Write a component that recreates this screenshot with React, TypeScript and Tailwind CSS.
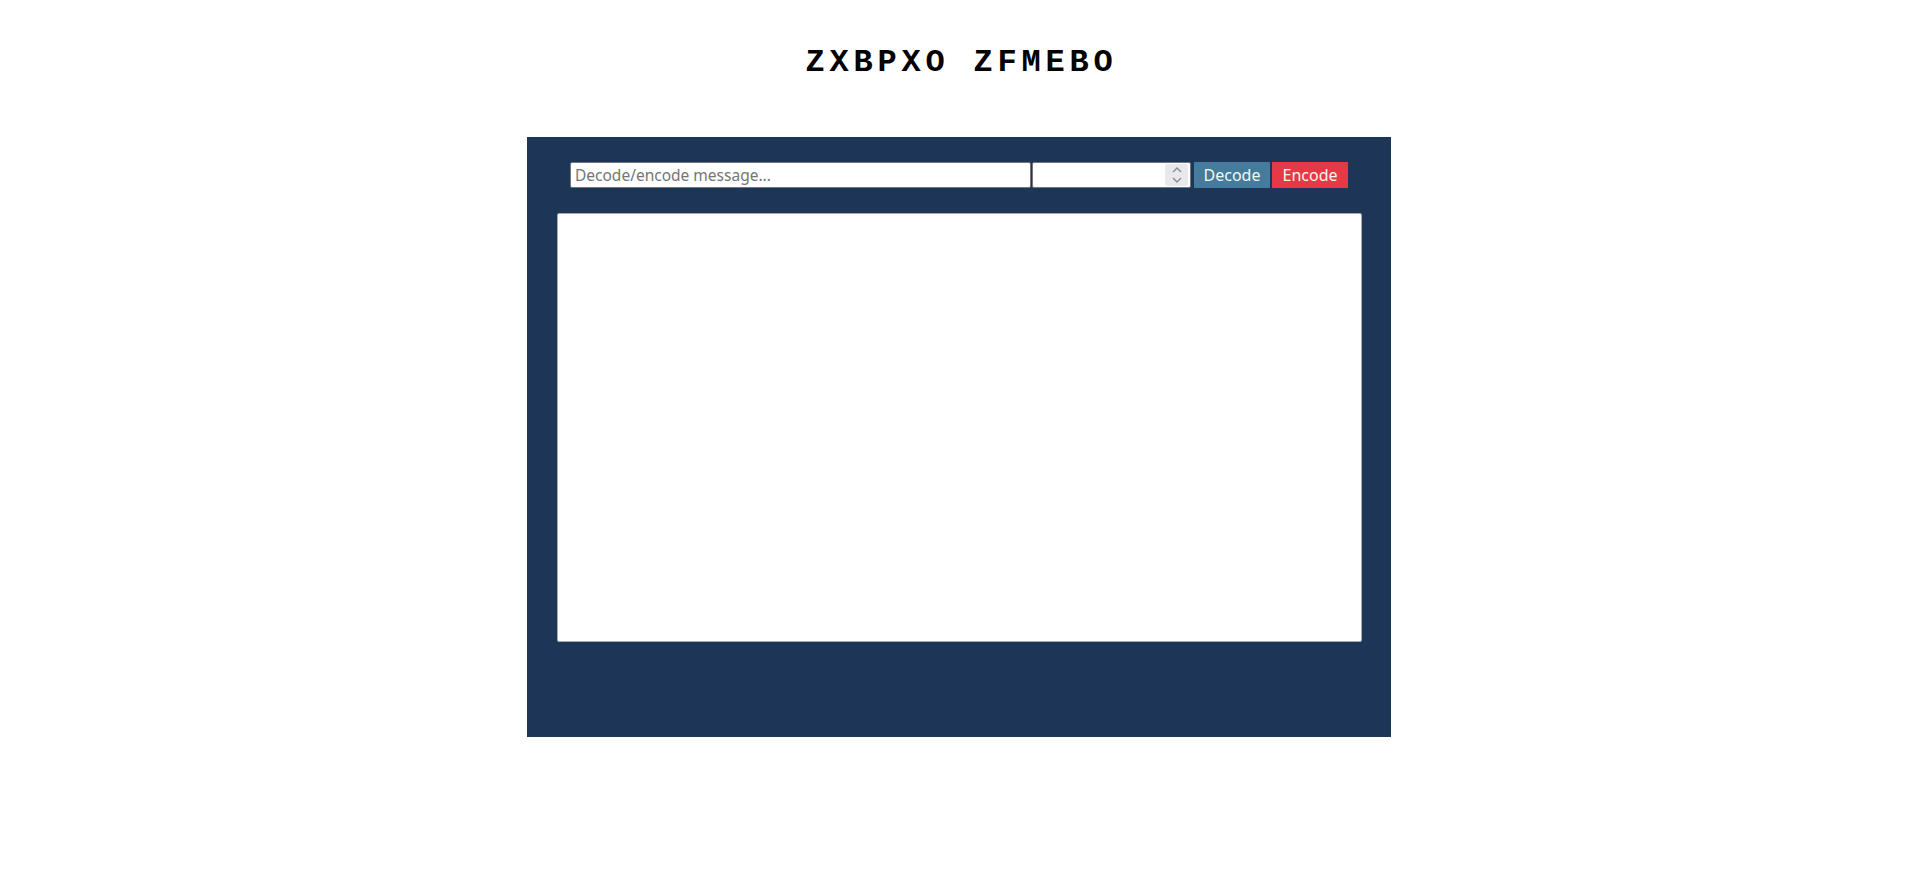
import React, { useState } from 'react';

const Spinner: React.FC = () => (
  <div className="flex flex-col items-center justify-center w-[23px] h-[22px] bg-[#e9e9ed] rounded-[2px] mr-[2px]">
    <svg width="12" height="20" viewBox="0 0 12 20" fill="none" stroke="#8a8a92" strokeWidth="1.4">
      <path d="M2 7 L6 3 L10 7" />
      <path d="M2 13 L6 17 L10 13" />
    </svg>
  </div>
);

const App: React.FC = () => {
  const [message, setMessage] = useState('');
  const [shift, setShift] = useState('');

  return (
    <div className="min-h-screen bg-white flex flex-col items-center font-['Noto_Sans',sans-serif]">
      <h1 className="mt-[45px] mb-[56px] h-[36px] leading-[36px] text-[32px] font-bold tracking-[0.15em] pl-[0.15em] text-black font-['Liberation_Mono','Courier_New',monospace]">
        ZXBPXO ZFMEBO
      </h1>

      <div className="w-[864px] h-[600px] bg-[#1d3557] flex flex-col items-center pt-[25px]">
        {/* Controls row */}
        <div className="flex items-center h-[26px]">
          <input
            type="text"
            value={message}
            onChange={e => setMessage(e.target.value)}
            placeholder="Decode/encode message..."
            className="w-[461px] h-[26px] bg-white border border-[#767676] rounded-[2px] px-[4px] text-[15.5px] text-black placeholder:text-[#757575] outline-none"
          />
          <div className="ml-[1px] w-[159px] h-[26px] flex items-center bg-white border border-[#767676] rounded-[2px]">
            <input
              type="text"
              value={shift}
              onChange={e => setShift(e.target.value)}
              className="flex-1 min-w-0 h-full px-[4px] text-[15.5px] outline-none bg-transparent"
            />
            <Spinner />
          </div>
          <button className="ml-[3px] w-[76px] h-[26px] bg-[#457b9d] text-[#f1faee] text-[16px] leading-none">
            Decode
          </button>
          <button className="ml-[2px] w-[76px] h-[26px] bg-[#e63946] text-[#f1faee] text-[16px] leading-none">
            Encode
          </button>
        </div>

        {/* Output area */}
        <textarea className="mt-[25px] w-[805px] h-[429px] bg-white border border-[#a9a9b2] rounded-[2px] resize-none outline-none p-[4px] text-[14px]" />
      </div>
    </div>
  );
};

export default App;
